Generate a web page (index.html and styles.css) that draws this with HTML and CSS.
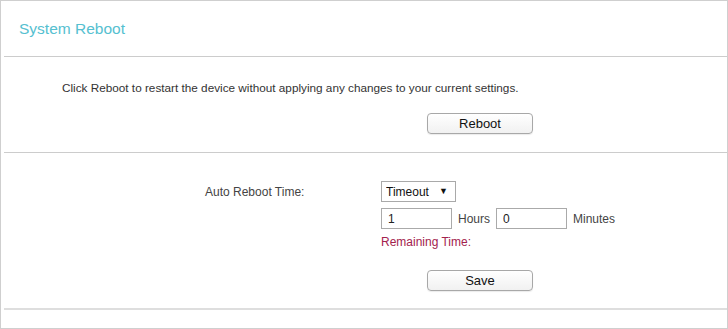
FILE: index.html
```html
<!DOCTYPE html>
<html>
<head>
    <title>System Reboot</title>
    <link rel="stylesheet" href="styles.css">
</head>
<body>
    <div class="panel">
        <div class="panel-head">
            <h2>System Reboot</h2>
        </div>
        <div class="divider"></div>

        <div class="section reboot-section">
            <p class="note">Click Reboot to restart the device without applying any changes to your current settings.</p>
            <div class="form-row">
                <span></span>
                <div class="field">
                    <button class="btn">Reboot</button>
                </div>
            </div>
        </div>
        <div class="divider"></div>

        <div class="section auto-section">
            <div class="form-row">
                <label>Auto Reboot Time:</label>
                <div class="field">
                    <span class="select-wrap">
                        <select id="mode">
                            <option>Timeout</option>
                            <option>Schedule</option>
                        </select>
                    </span>
                </div>
            </div>
            <div class="form-row">
                <span></span>
                <div class="field inline">
                    <input type="text" id="hours" value="1">
                    <span class="unit">Hours</span>
                    <input type="text" id="minutes" value="0">
                    <span class="unit">Minutes</span>
                </div>
            </div>
            <div class="form-row">
                <span></span>
                <div class="field">
                    <span class="remaining">Remaining Time:</span>
                </div>
            </div>
            <div class="form-row save-row">
                <span></span>
                <div class="field">
                    <button class="btn">Save</button>
                </div>
            </div>
        </div>
        <div class="divider thick"></div>
    </div>
</body>
</html>
```

FILE: styles.css
```css
body {
    margin: 0;
    font-family: "Liberation Sans", Arial, sans-serif;
    font-size: 12px;
    color: #333;
    background: #fff;
}

.panel {
    width: 728px;
    height: 329px;
    box-sizing: border-box;
    border: 1px solid #cfcfcf;
}

.panel-head {
    height: 55px;
    display: flex;
    align-items: center;
    padding-left: 18px;
}

.panel-head h2 {
    margin: 0;
    font-size: 15.5px;
    font-weight: normal;
    color: #55c0d0;
}

.divider {
    height: 1px;
    margin-left: 3px;
    background: #cccccc;
}

.divider.thick {
    height: 2px;
    background: #dedede;
}

.reboot-section {
    padding: 24px 0 18px;
}

.note {
    margin: 0 0 18px 61px;
    font-size: 11.75px;
    line-height: 14px;
}

.form-row {
    display: grid;
    grid-template-columns: 380px 1fr;
    align-items: center;
}

.form-row label {
    padding-left: 204px;
    color: #444;
}

.field.inline {
    display: flex;
    align-items: center;
    gap: 6px;
}

.auto-section {
    padding: 28px 0 17px;
}

.auto-section .form-row + .form-row {
    margin-top: 6px;
}

.auto-section .form-row.save-row {
    margin-top: 21px;
}

.btn {
    margin-left: 46px;
    width: 106px;
    height: 21px;
    padding: 0;
    border: 1px solid #a8a8a8;
    border-radius: 4px;
    background: linear-gradient(#ffffff, #f1f1f1);
    font-family: inherit;
    font-size: 13px;
    color: #111;
    box-shadow: 0 1px 1px rgba(0,0,0,0.08);
}

.select-wrap {
    position: relative;
    display: inline-block;
}

.select-wrap select {
    appearance: none;
    width: 75px;
    height: 21px;
    padding: 0 0 0 4px;
    border: 1px solid #a9a9a9;
    border-radius: 0;
    background: #fff;
    font-family: inherit;
    font-size: 12px;
    color: #111;
    display: block;
}

.select-wrap::after {
    content: "\25BC";
    position: absolute;
    right: 8px;
    top: 5px;
    font-size: 9px;
    color: #111;
    pointer-events: none;
}

input[type="text"] {
    width: 71px;
    height: 21px;
    box-sizing: border-box;
    padding: 0 6px;
    border: 1px solid #aaaaaa;
    font-family: inherit;
    font-size: 12px;
    color: #222;
    margin: 0;
}

.unit {
    color: #444;
}

.remaining {
    color: #a3224d;
    line-height: 14px;
    display: block;
}
```
